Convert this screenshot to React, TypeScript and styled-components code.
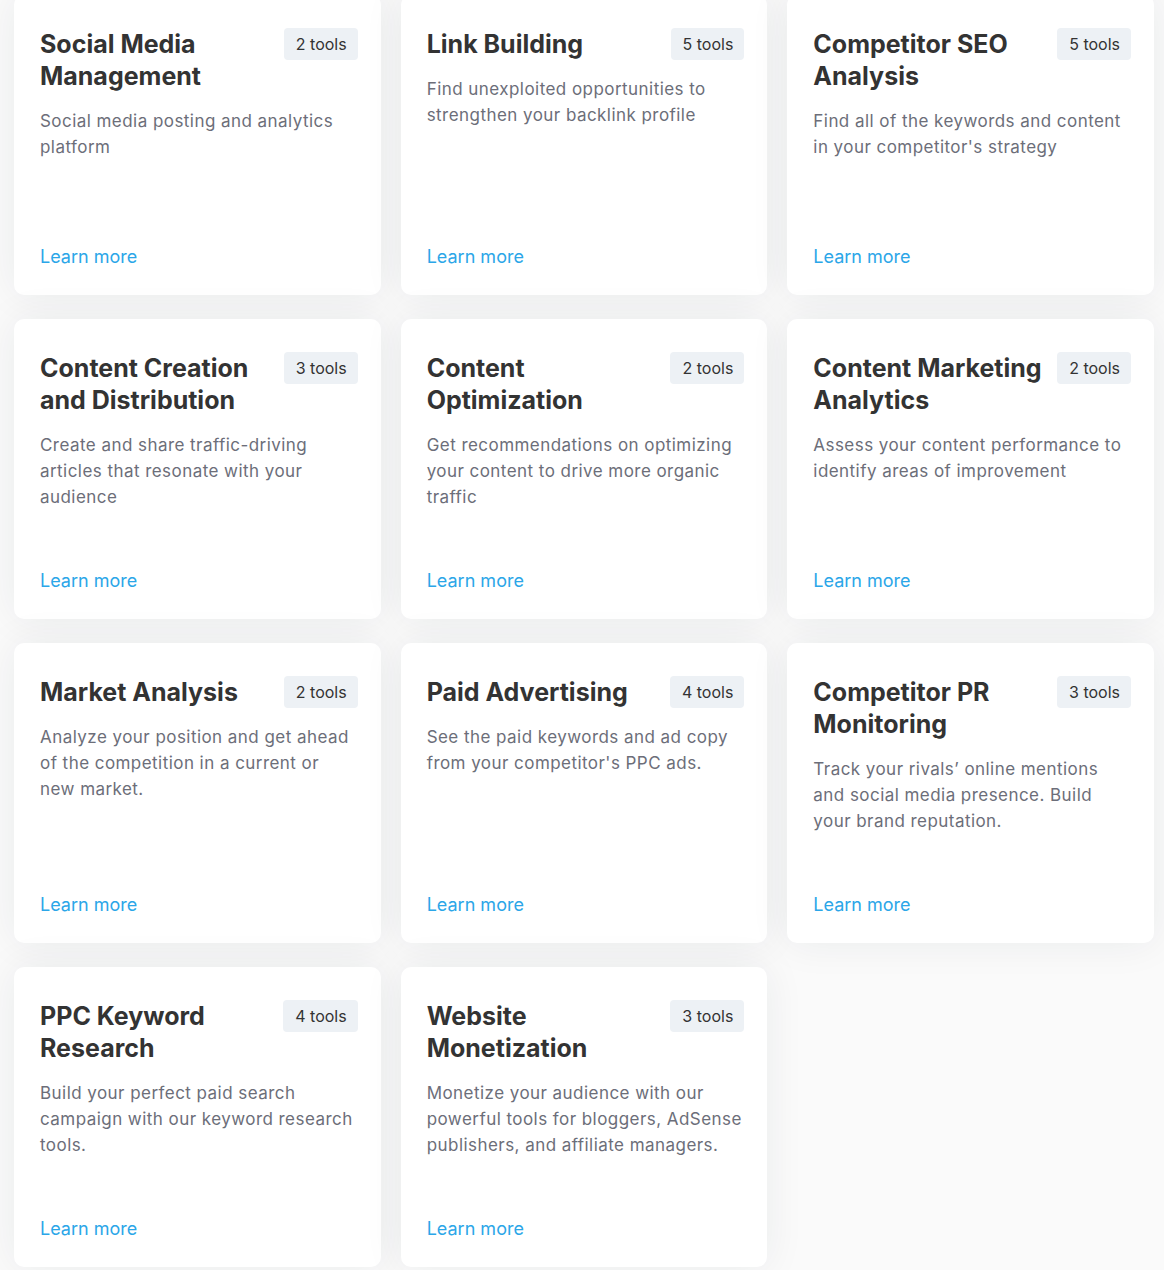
import React from 'react'
import styled, { createGlobalStyle } from 'styled-components'

const GlobalStyle = createGlobalStyle`
  html, body {
    margin: 0;
    padding: 0;
    background: #fafafa;
  }
  body {
    font-family: Inter, "Noto Sans", "Liberation Sans", sans-serif;
    -webkit-font-smoothing: antialiased;
  }
`

interface Solution {
  title: string
  tools: number
  text: string
}

const solutions: Solution[] = [
  { title: 'Social Media Management', tools: 2, text: 'Social media posting and analytics platform' },
  { title: 'Link Building', tools: 5, text: 'Find unexploited opportunities to strengthen your backlink profile' },
  { title: 'Competitor SEO Analysis', tools: 5, text: "Find all of the keywords and content in your competitor's strategy" },
  { title: 'Content Creation and Distribution', tools: 3, text: 'Create and share traffic-driving articles that resonate with your audience' },
  { title: 'Content Optimization', tools: 2, text: 'Get recommendations on optimizing your content to drive more organic traffic' },
  { title: 'Content Marketing Analytics', tools: 2, text: 'Assess your content performance to identify areas of improvement' },
  { title: 'Market Analysis', tools: 2, text: 'Analyze your position and get ahead of the competition in a current or new market.' },
  { title: 'Paid Advertising', tools: 4, text: "See the paid keywords and ad copy from your competitor's PPC ads." },
  { title: 'Competitor PR Monitoring', tools: 3, text: 'Track your rivals\u2019 online mentions and social media presence. Build your brand reputation.' },
  { title: 'PPC Keyword Research', tools: 4, text: 'Build your perfect paid search campaign with our keyword research tools.' },
  { title: 'Website Monetization', tools: 3, text: 'Monetize your audience with our powerful tools for bloggers, AdSense publishers, and affiliate managers.' },
]

const App: React.FC = () => {
  return (
    <>
      <GlobalStyle />
      <StyledGrid>
        {solutions.map((s, i) => (
          <SolutionCard key={i} solution={s} />
        ))}
      </StyledGrid>
    </>
  )
}

interface SolutionCardProps {
  solution: Solution
}

const SolutionCard: React.FC<SolutionCardProps> = ({ solution }) => {
  const { title, tools, text } = solution
  return (
    <StyledCard>
      <StyledHeader>
        <StyledTitle>{title}</StyledTitle>
        <StyledBadge>{tools} tools</StyledBadge>
      </StyledHeader>
      <StyledText>{text}</StyledText>
      <StyledLink href="#">Learn more</StyledLink>
    </StyledCard>
  )
}

const StyledGrid = styled.div`
  display: grid;
  grid-template-columns: repeat(3, 1fr);
  column-gap: 20px;
  row-gap: 24px;
  padding: 0 10px 4px 14px;
  margin-top: -5px;
`

const StyledCard = styled.div`
  display: flex;
  flex-direction: column;
  box-sizing: border-box;
  height: 300px;
  padding: 33px 23px 25px 26px;
  background: #fff;
  border-radius: 10px;
  box-shadow: 0 0 40px rgba(30, 40, 60, 0.07);
`

const StyledHeader = styled.div`
  display: flex;
  align-items: flex-start;
  justify-content: space-between;
  gap: 12px;
`

const StyledTitle = styled.h3`
  margin: 0;
  padding: 0;
  color: #333;
  font-size: 25px;
  font-weight: 700;
  line-height: 32px;
`

const StyledBadge = styled.span`
  flex-shrink: 0;
  height: 32px;
  line-height: 32px;
  padding: 0 11px 0 12px;
  border-radius: 4px;
  background: #edf1f5;
  color: #333;
  font-size: 16px;
  white-space: nowrap;
`

const StyledText = styled.p`
  margin: 16px 0 0;
  color: #6c6e79;
  font-size: 17px;
  line-height: 26px;
  letter-spacing: 0.45px;
`

const StyledLink = styled.a`
  margin-top: auto;
  color: #2ba6e8;
  font-size: 18px;
  line-height: 26px;
  text-decoration: none;
`

export default App
